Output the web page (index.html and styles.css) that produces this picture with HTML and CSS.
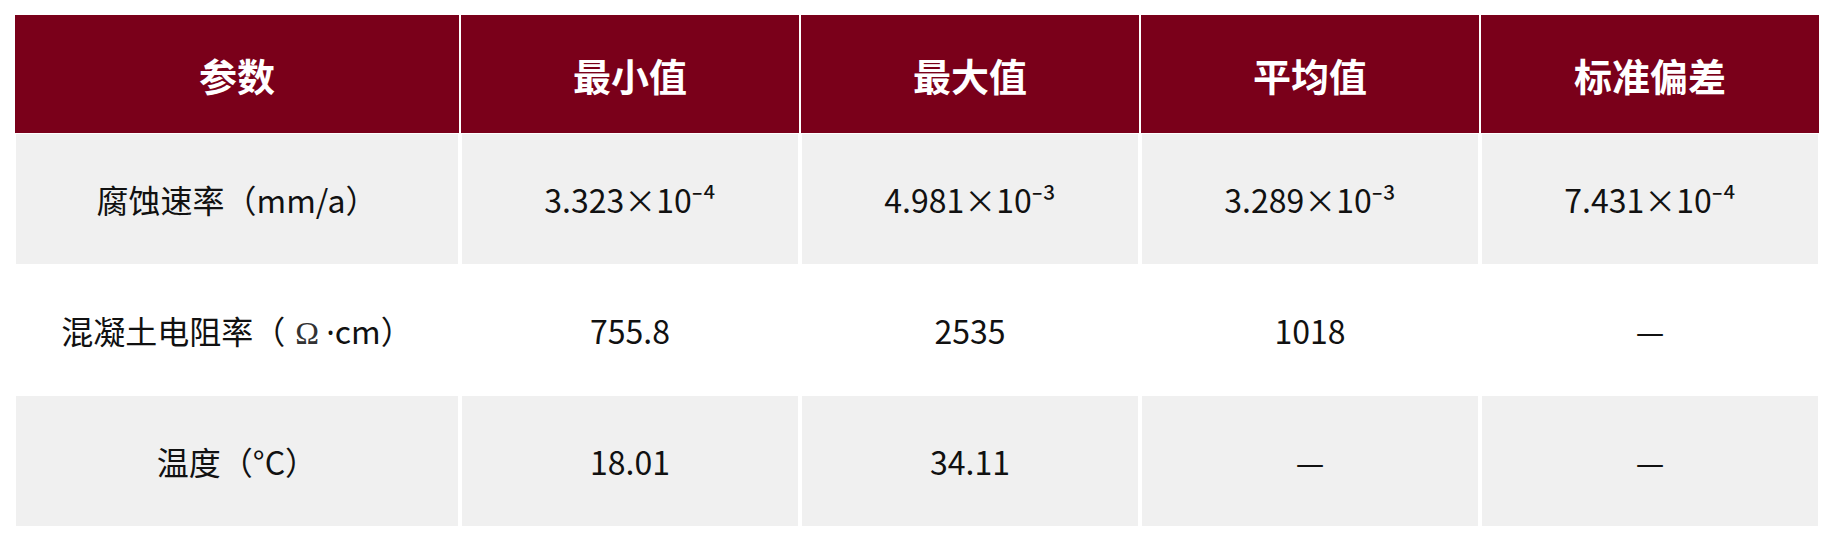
FILE: index.html
```html
<!DOCTYPE html>
<html lang="zh-CN">
<head>
<meta charset="utf-8">
<title>参数统计</title>
<link rel="stylesheet" href="styles.css">
</head>
<body>
<table class="stats">
  <colgroup>
    <col class="col-param">
    <col><col><col><col>
  </colgroup>
  <thead>
    <tr>
      <th>参数</th>
      <th>最小值</th>
      <th>最大值</th>
      <th>平均值</th>
      <th>标准偏差</th>
    </tr>
  </thead>
  <tbody>
    <tr class="shaded">
      <td>腐蚀速率（mm/a）</td>
      <td>3.323×10⁻⁴</td>
      <td>4.981×10⁻³</td>
      <td>3.289×10⁻³</td>
      <td>7.431×10⁻⁴</td>
    </tr>
    <tr>
      <td>混凝土电阻率（<span class="ohm">Ω</span> <span class="dot">·</span>cm）</td>
      <td>755.8</td>
      <td>2535</td>
      <td>1018</td>
      <td>—</td>
    </tr>
    <tr class="shaded">
      <td>温度（°C）</td>
      <td>18.01</td>
      <td>34.11</td>
      <td>—</td>
      <td>—</td>
    </tr>
  </tbody>
</table>
</body>
</html>
```

FILE: styles.css
```css
html, body {
  margin: 0;
  padding: 0;
  background: #ffffff;
}

body {
  font-family: "Noto Sans CJK SC", "Noto Sans", sans-serif;
  color: #111111;
}

.stats {
  table-layout: fixed;
  border-collapse: separate;
  border-spacing: 2px 1px;
  width: 1808px;
  margin: 14px 13px 0;
}

.col-param {
  width: 444px;
}

.stats th {
  height: 118px;
  padding: 0;
  background: #7a001a;
  color: #ffffff;
  font-size: 38px;
  font-weight: 700;
  text-align: center;
  vertical-align: middle;
}

.stats td {
  height: 130px;
  padding: 0;
  border-left: 1px solid #ffffff;
  border-right: 1px solid #ffffff;
  font-size: 32px;
  font-weight: 400;
  text-align: center;
  vertical-align: middle;
}

.stats tr.shaded td {
  background: #f0f0f0;
}

.ohm {
  font-family: "Liberation Serif", serif;
  color: #333333;
  padding-left: 10px;
}

.dot {
  font-family: "Noto Sans", sans-serif;
}
```
